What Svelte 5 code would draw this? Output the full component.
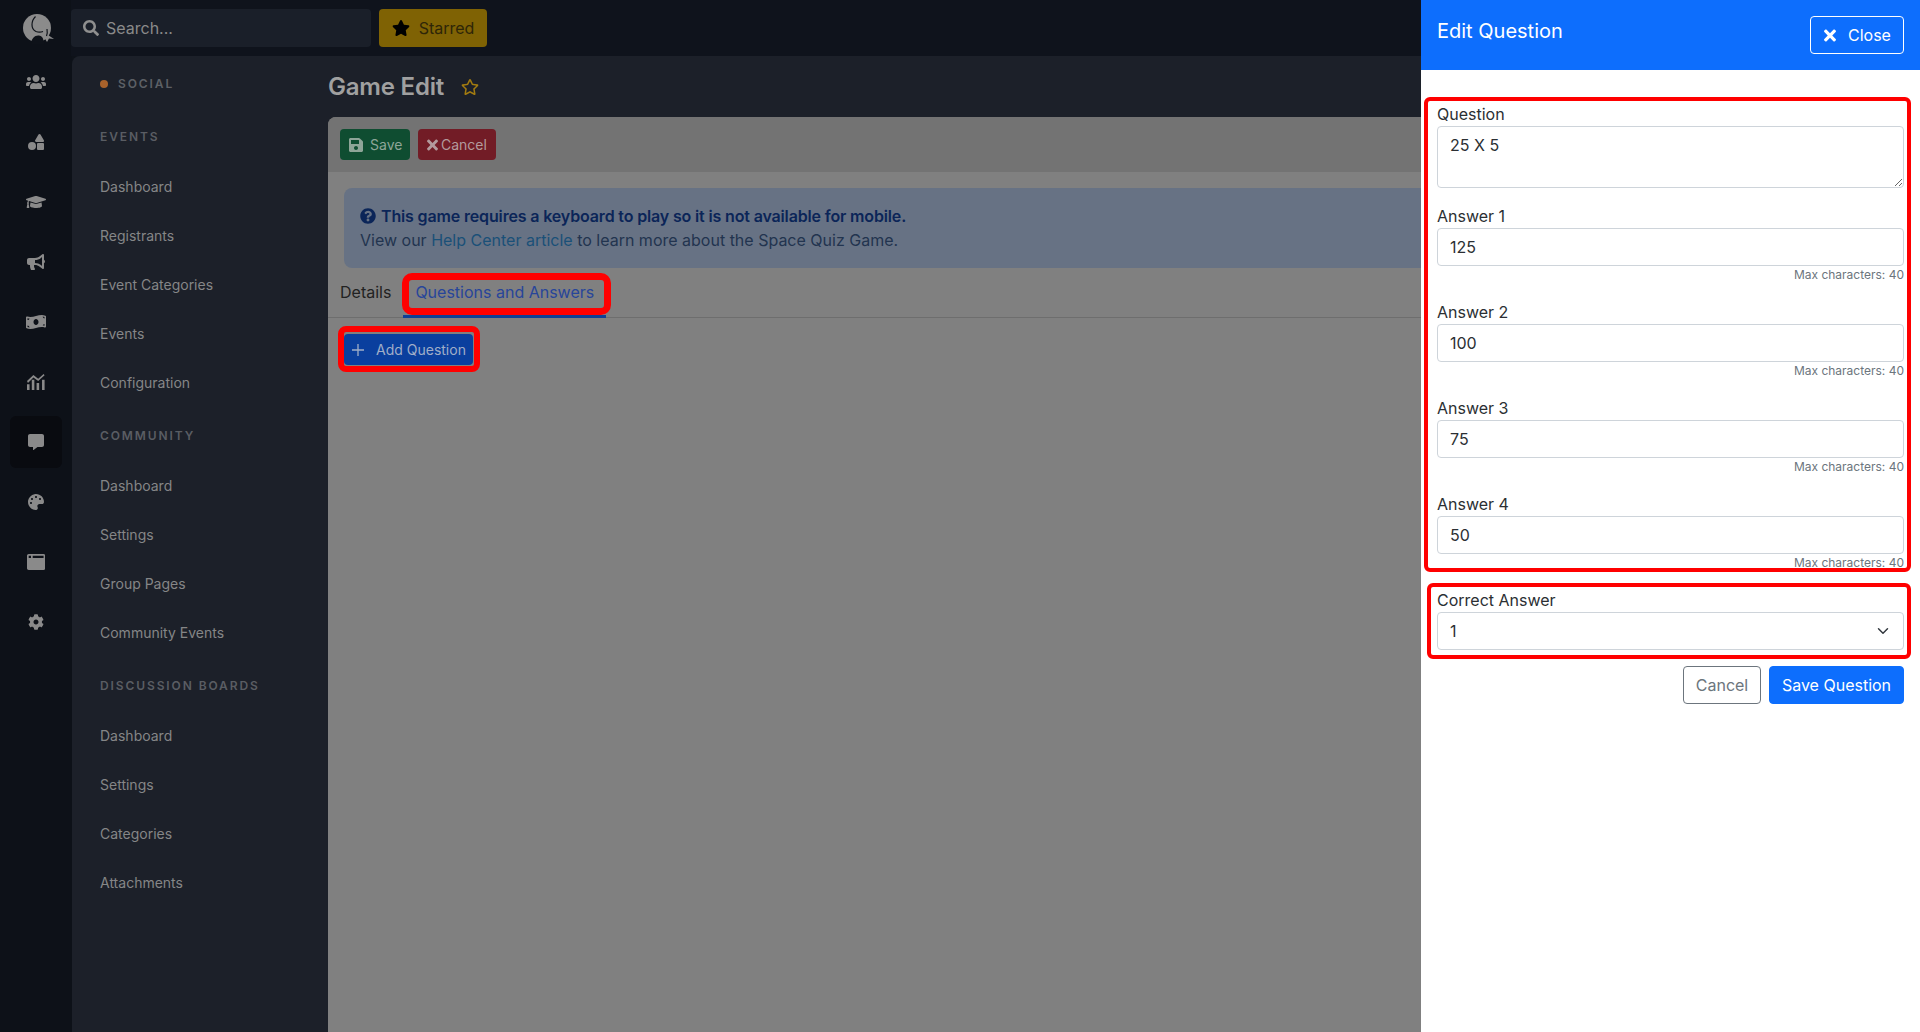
<script lang="ts">
  const groups = [
    { title: "Events", links: ["Dashboard", "Registrants", "Event Categories", "Events", "Configuration"] },
    { title: "Community", links: ["Dashboard", "Settings", "Group Pages", "Community Events"] },
    { title: "Discussion Boards", links: ["Dashboard", "Settings", "Categories", "Attachments"] },
  ];
  const answers = [
    { label: "Answer 1", value: "125" },
    { label: "Answer 2", value: "100" },
    { label: "Answer 3", value: "75" },
    { label: "Answer 4", value: "50" },
  ];

  const star = "M259.3 17.8L194 150.2 47.9 171.5c-26.2 3.8-36.7 36.1-17.7 54.6l105.7 103-25 145.5c-4.5 26.3 23.2 46 46.4 33.7L288 439.6l130.7 68.7c23.2 12.2 50.9-7.4 46.4-33.7l-25-145.5 105.7-103c19-18.5 8.5-50.8-17.7-54.6L382 150.2 316.7 17.8c-11.7-23.6-45.6-23.9-57.4 0z";
  const starOutline = "M528.1 171.5L382 150.2 316.7 17.8c-11.7-23.6-45.6-23.9-57.4 0L194 150.2 47.9 171.5c-26.2 3.8-36.7 36.1-17.7 54.6l105.7 103-25 145.5c-4.5 26.3 23.2 46 46.4 33.7L288 439.6l130.7 68.7c23.2 12.2 50.9-7.4 46.4-33.7l-25-145.5 105.7-103c19-18.5 8.5-50.8-17.7-54.6zM388.6 312.3l23.7 138.4L288 385.4l-124.3 65.3 23.7-138.4-100.6-98 139-20.2 62.2-126 62.2 126 139 20.2-100.6 98z";
  const times = "M242.72 256l100.07-100.07c12.28-12.28 12.28-32.19 0-44.48l-22.24-22.24c-12.28-12.28-32.19-12.28-44.48 0L176 189.28 75.93 89.21c-12.28-12.28-32.19-12.28-44.48 0L9.21 111.45c-12.28 12.28-12.28 32.19 0 44.48L109.28 256 9.21 356.07c-12.28 12.28-12.28 32.19 0 44.48l22.24 22.24c12.28 12.28 32.2 12.28 44.48 0L176 322.72l100.07 100.07c12.28 12.28 32.2 12.28 44.48 0l22.24-22.24c12.28-12.28 12.28-32.19 0-44.48L242.72 256z";
  const search = "M505 442.7L405.3 343c-4.5-4.5-10.6-7-17-7H372c27.6-35.3 44-79.7 44-128C416 93.1 322.9 0 208 0S0 93.1 0 208s93.1 208 208 208c48.3 0 92.7-16.4 128-44v16.3c0 6.4 2.5 12.5 7 17l99.7 99.7c9.4 9.4 24.6 9.4 33.9 0l28.3-28.3c9.4-9.4 9.4-24.6.1-34zM208 336c-70.7 0-128-57.2-128-128 0-70.7 57.2-128 128-128 70.7 0 128 57.2 128 128 0 70.7-57.2 128-128 128z";
  const save = "M433.941 129.941l-83.882-83.882A48 48 0 0 0 316.118 32H48C21.49 32 0 53.49 0 80v352c0 26.51 21.49 48 48 48h352c26.51 0 48-21.49 48-48V163.882a48 48 0 0 0-14.059-33.941zM224 416c-35.346 0-64-28.654-64-64 0-35.346 28.654-64 64-64s64 28.654 64 64c0 35.346-28.654 64-64 64zm96-304.52V212c0 6.627-5.373 12-12 12H76c-6.627 0-12-5.373-12-12V108c0-6.627 5.373-12 12-12h228.52c3.183 0 6.235 1.264 8.485 3.515l3.48 3.48A11.996 11.996 0 0 1 320 111.48z";
  const question = "M504 256c0 136.997-111.043 248-248 248S8 392.997 8 256C8 119.083 119.043 8 256 8s248 111.083 248 248zM262.655 90c-54.497 0-89.255 22.957-116.549 63.758-3.536 5.286-2.353 12.415 2.715 16.258l34.699 26.31c5.205 3.947 12.621 3.008 16.665-2.122 17.864-22.658 30.113-35.797 57.303-35.797 20.429 0 45.698 13.148 45.698 32.958 0 14.976-12.363 22.667-32.534 33.976C247.128 238.528 216 254.941 216 296v4c0 6.627 5.373 12 12 12h56c6.627 0 12-5.373 12-12v-1.333c0-28.462 83.186-29.647 83.186-106.667 0-58.002-60.165-102-116.531-102zM256 338c-25.365 0-46 20.635-46 46 0 25.364 20.635 46 46 46s46-20.636 46-46c0-25.365-20.635-46-46-46z";

  const rail = [
    { vb: "0 0 640 512", d: "M96 224c35.3 0 64-28.7 64-64s-28.7-64-64-64-64 28.7-64 64 28.7 64 64 64zm448 0c35.3 0 64-28.7 64-64s-28.7-64-64-64-64 28.7-64 64 28.7 64 64 64zm32 32h-64c-17.6 0-33.5 7.1-45.1 18.6 40.3 22.1 68.9 62 75.1 109.4h66c17.7 0 32-14.3 32-32v-32c0-35.3-28.7-64-64-64zm-256 0c61.9 0 112-50.1 112-112S381.9 32 320 32 208 82.1 208 144s50.1 112 112 112zm76.8 32h-8.3c-20.8 10-43.9 16-68.5 16s-47.6-6-68.5-16h-8.3C179.6 288 128 339.6 128 403.2V432c0 26.5 21.5 48 48 48h288c26.5 0 48-21.5 48-48v-28.8c0-63.6-51.6-115.2-115.2-115.2zm-223.7-13.4C161.5 263.1 145.6 256 128 256H64c-35.3 0-64 28.7-64 64v32c0 17.7 14.3 32 32 32h65.9c6.3-47.4 34.9-87.3 75.2-109.4z" },
    { vb: "0 0 512 512", d: "M128,256A128,128,0,1,0,256,384,128,128,0,0,0,128,256Zm379-54.86L400.07,18.29a37.26,37.26,0,0,0-64.14,0L229,201.14C214.76,225.52,232.58,256,261.09,256H474.91C503.42,256,521.24,225.52,507,201.14ZM480,288H320a32,32,0,0,0-32,32V480a32,32,0,0,0,32,32H480a32,32,0,0,0,32-32V320A32,32,0,0,0,480,288Z" },
    { vb: "0 0 640 512", d: "M622.34 153.2L343.4 67.5c-15.2-4.67-31.6-4.67-46.79 0L17.66 153.2c-23.54 7.23-23.54 38.36 0 45.59l48.63 14.94c-10.67 13.19-17.23 29.28-17.88 46.9C38.78 266.15 32 276.11 32 288c0 10.78 5.68 19.85 13.86 25.65L20.33 428.53C18.11 438.52 25.71 448 35.94 448h56.11c10.24 0 17.84-9.48 15.62-19.47L82.14 313.65C90.32 307.85 96 298.78 96 288c0-11.57-6.47-21.25-15.66-26.87.76-15.02 8.44-28.3 20.69-36.72L296.6 284.5c9.06 2.78 26.44 6.25 46.79 0l278.95-85.7c23.55-7.24 23.55-38.36 0-45.6zM352.79 315.09c-28.53 8.76-52.84 3.92-65.59 0l-145.02-44.55L128 384c0 35.35 85.96 64 192 64s192-28.65 192-64l-14.18-113.47-145.03 44.56z" },
    { vb: "0 0 576 512", d: "M576 240c0-23.63-12.95-44.04-32-55.12V32.01C544 23.26 537.02 0 512 0c-7.12 0-14.19 2.38-19.98 7.02l-85.03 68.03C364.28 109.09 310.66 128 256 128H64c-35.35 0-64 28.65-64 64v96c0 35.35 28.65 64 64 64h33.7c-1.39 10.48-2.18 21.14-2.18 32 0 39.77 9.26 77.35 25.56 110.94 5.19 10.69 16.52 17.06 28.4 17.06h74.28c26.05 0 41.69-29.84 25.9-50.56-16.4-21.52-26.15-48.36-26.15-77.44 0-11.11 1.62-21.79 4.41-32H256c54.66 0 108.28 18.91 150.98 52.95l85.03 68.03a32.023 32.023 0 0 0 19.98 7.02c24.92 0 32-22.78 32-32V295.13C563.05 284.04 576 263.63 576 240zm-96 141.42l-33.05-26.44C392.95 311.78 325.12 288 256 288v-96c69.12 0 136.95-23.78 190.95-66.98L480 98.58v282.84z" },
    { vb: "0 0 640 512", d: "M621.16 54.46C582.37 38.19 543.55 32 504.75 32c-123.17-.01-246.33 62.34-369.5 62.34-30.89 0-61.76-3.92-92.65-13.72-3.47-1.1-6.95-1.62-10.35-1.62C15.04 79 0 92.32 0 110.81v317.26c0 12.63 7.23 24.6 18.84 29.46C57.63 473.81 96.45 480 135.25 480c123.17 0 246.34-62.35 369.51-62.35 30.89 0 61.76 3.92 92.65 13.72 3.47 1.1 6.95 1.62 10.35 1.62 17.21 0 32.25-13.32 32.25-31.81V83.93c-.01-12.64-7.24-24.6-18.85-29.47zM48 132.22c20.12 5.04 41.12 7.57 62.72 8.93C104.84 170.54 79 192.69 48 192.69v-60.47zm0 285v-47.78c34.37 0 62.18 27.27 63.71 61.4-22.53-1.81-43.59-6.31-63.71-13.62zM320 352c-44.19 0-80-42.99-80-96 0-53.02 35.82-96 80-96s80 42.98 80 96c0 53.03-35.83 96-80 96zm272 27.78c-17.52-4.39-35.71-6.85-54.32-8.44 5.87-26.08 27.5-45.88 54.32-49.28v57.72zm0-236.11c-30.89-3.91-54.86-29.7-55.81-61.55 19.54 2.17 38.09 6.23 55.81 12.66v48.89z" },
    { vb: "0 0 55 50", d: "M0 32h8v18H0zM15 18h8v32h-8zM30 28h8v22h-8zM47 18h8v32h-8zM0 22L20 3l15 12L52 0l3 4-20 18-15-11L3 28z" },
    { vb: "0 0 512 512", d: "M448 0H64C28.7 0 0 28.7 0 64v288c0 35.3 28.7 64 64 64h96v84c0 9.8 11.2 15.5 19.1 9.7L304 416h144c35.3 0 64-28.7 64-64V64c0-35.3-28.7-64-64-64z" },
    { vb: "0 0 512 512", d: "M204.3 5C104.9 24.4 24.8 104.3 5.2 203.4c-37 187 131.7 326.4 258.8 306.7 41.2-6.4 61.4-54.6 42.5-91.7-23.1-45.4 9.9-98.4 60.9-98.4h79.7c35.8 0 64.8-29.6 64.9-65.3C511.5 97.1 368.1-26.9 204.3 5zM96 320c-17.7 0-32-14.3-32-32s14.3-32 32-32 32 14.3 32 32-14.3 32-32 32zm32-128c-17.7 0-32-14.3-32-32s14.3-32 32-32 32 14.3 32 32-14.3 32-32 32zm128-64c-17.7 0-32-14.3-32-32s14.3-32 32-32 32 14.3 32 32-14.3 32-32 32zm128 64c-17.7 0-32-14.3-32-32s14.3-32 32-32 32 14.3 32 32-14.3 32-32 32z" },
    { vb: "0 0 512 448", d: "M48 0h416c26.500 0 48 21.500 48 48v352c0 26.500-21.500 48-48 48H48c-26.500 0-48-21.500-48-48V48C0 21.500 21.500 0 48 0zM48 48v64h64V48zm112 0v64h304V48z" },
    { vb: "0 0 512 512", d: "M487.4 315.7l-42.6-24.6c4.3-23.2 4.3-47 0-70.2l42.6-24.6c4.9-2.8 7.1-8.6 5.5-14-11.1-35.6-30-67.8-54.7-94.6-3.8-4.1-10-5.1-14.8-2.3L380.8 110c-17.9-15.4-38.5-27.3-60.8-35.1V25.8c0-5.6-3.9-10.5-9.4-11.7-36.7-8.2-74.3-7.8-109.2 0-5.5 1.2-9.4 6.1-9.4 11.7V75c-22.2 7.9-42.8 19.8-60.8 35.1L88.7 85.5c-4.9-2.8-11-1.9-14.8 2.3-24.7 26.7-43.6 58.9-54.7 94.6-1.7 5.4.6 11.2 5.5 14L67.3 221c-4.3 23.2-4.3 47 0 70.2l-42.6 24.6c-4.9 2.8-7.1 8.6-5.5 14 11.1 35.6 30 67.8 54.7 94.6 3.8 4.1 10 5.1 14.8 2.3l42.6-24.6c17.9 15.4 38.5 27.3 60.8 35.1v49.2c0 5.6 3.9 10.5 9.4 11.7 36.7 8.2 74.3 7.8 109.2 0 5.5-1.2 9.4-6.1 9.4-11.7v-49.2c22.2-7.9 42.8-19.8 60.8-35.1l42.6 24.6c4.9 2.8 11 1.9 14.8-2.3 24.7-26.7 43.6-58.9 54.7-94.6 1.5-5.5-.7-11.3-5.6-14.1zM256 336c-44.1 0-80-35.9-80-80s35.9-80 80-80 80 35.9 80 80-35.9 80-80 80z" },
  ];
  const activeRail = 6;
</script>

<div class="app">
  <aside class="rail">
    <div class="logo">
      <svg viewBox="0 0 32 30" width="32" height="30">
        <circle cx="14" cy="14" r="14" fill="#8b8b8b"/>
        <path fill="#8b8b8b" d="M23 13l2 8 6 4-5-.5-2 3.500-3-5z"/>
        <path fill="#0e1219" d="M8 30c.5-6 4-9 8-8.500 2.500.3 4 2 4.500 5l1.500 3.500z"/>
        <path fill="none" stroke="#0e1219" stroke-width="1.200" d="M12.500 2.500C8 7 7.500 15 13 17.500c2.500 1 5 .8 7 0M24 15c.5 3 .5 5-.5 7"/>
      </svg>
    </div>
    {#each rail as icon, i}
      <div class="rail-cell">
        <div class="rail-item" class:active={i === activeRail}>
          <svg viewBox={icon.vb} height="16" fill="#8a8a8a" fill-rule="evenodd"><path d={icon.d}/></svg>
        </div>
      </div>
    {/each}
  </aside>

  <div class="main">
    <header class="topbar">
      <div class="search">
        <svg viewBox="0 0 512 512" width="16" height="16" fill="#8f8f8f"><path d={search}/></svg>
        <input type="text" placeholder="Search..." />
      </div>
      <button class="starred">
        <svg viewBox="0 0 576 512" width="18" height="16" fill="#000"><path d={star}/></svg>
        Starred
      </button>
    </header>

    <div class="body">
      <nav class="sidebar">
        <div class="social"><span class="dot"></span>SOCIAL</div>
        {#each groups as group}
          <div class="group-title">{group.title}</div>
          {#each group.links as link}
            <a class="side-link" href="#top">{link}</a>
          {/each}
        {/each}
      </nav>

      <main class="content">
        <div class="page-title">
          <h1>Game Edit</h1>
          <svg viewBox="0 0 576 512" width="18" height="16" fill="#a27b10"><path d={starOutline}/></svg>
        </div>

        <section class="card">
          <div class="card-head">
            <button class="btn green">
              <svg viewBox="0 0 448 512" width="14" height="16" fill="currentColor" fill-rule="evenodd"><path d={save}/></svg>
              Save
            </button>
            <button class="btn red">
              <svg viewBox="0 64 352 384" width="11" height="12" fill="currentColor"><path d={times}/></svg>
              Cancel
            </button>
          </div>
          <div class="card-body">
            <div class="alert">
              <div class="alert-strong">
                <svg viewBox="0 0 512 512" width="16" height="16" fill="currentColor" fill-rule="evenodd"><path d={question}/></svg>
                This game requires a keyboard to play so it is not available for mobile.
              </div>
              <div>View our <a href="#top">Help Center article</a> to learn more about the Space Quiz Game.</div>
            </div>
            <div class="tabs">
              <span class="tab">Details</span>
              <span class="tab active">Questions and Answers</span>
            </div>
            <button class="btn blue">
              <svg viewBox="0 0 12 12" width="12" height="12" stroke="currentColor" stroke-width="1.300" fill="none"><path d="M6 0v12M0 6h12"/></svg>
              Add Question
            </button>
          </div>
        </section>
      </main>
    </div>
  </div>

  <aside class="panel">
    <header class="panel-head">
      <h2>Edit Question</h2>
      <button class="close">
        <svg viewBox="0 64 352 384" width="12" height="13" fill="#fff"><path d={times}/></svg>
        Close
      </button>
    </header>
    <form class="panel-body">
      <label class="field">
        <span>Question</span>
        <textarea rows="2">25 X 5</textarea>
      </label>
      {#each answers as answer}
        <label class="field">
          <span>{answer.label}</span>
          <input type="text" value={answer.value} />
          <small>Max characters: 40</small>
        </label>
      {/each}
      <label class="field">
        <span>Correct Answer</span>
        <select>
          <option>1</option>
          <option>2</option>
          <option>3</option>
          <option>4</option>
        </select>
      </label>
      <div class="panel-actions">
        <button type="button" class="ghost">Cancel</button>
        <button type="button" class="primary">Save Question</button>
      </div>
    </form>
  </aside>

  <!-- red annotation boxes drawn on top of the screenshot -->
  <div class="mark mark-tab"></div>
  <div class="mark mark-add"></div>
  <div class="mark mark-form"></div>
  <div class="mark mark-select"></div>
</div>

<style>
  :global(body) { margin:0; background:#0d1118; font-family:Inter, "Noto Sans", sans-serif; }
  .app { position:relative; display:flex; height:100vh; min-height:1032px; overflow:hidden; font-family:Inter, "Noto Sans", sans-serif; font-size:16px; line-height:24px; background:#0e1219; }
  svg { display:block; flex-shrink:0; }
  button { font-family:inherit; cursor:pointer; }

  .rail { width:72px; flex-shrink:0; background:#0d1118; }
  .logo { height:52px; display:flex; align-items:center; justify-content:center; padding:5px 0 0 6px; box-sizing:border-box; }
  .rail-cell { height:60px; display:flex; align-items:center; justify-content:center; }
  .rail-item { width:52px; height:52px; border-radius:6px; display:flex; align-items:center; justify-content:center; }
  .rail-item.active { background:#090b10; }

  .main { flex:1; min-width:0; display:flex; flex-direction:column; }
  .topbar { height:56px; flex-shrink:0; display:flex; align-items:flex-start; gap:8px; padding-top:9px; box-sizing:border-box; background:#0f131c; margin-left:-1px; }
  .search { width:300px; height:38px; box-sizing:border-box; display:flex; align-items:center; gap:7px; padding-left:12px; background:#1a1f29; border-radius:4px; }
  .search input { flex:1; min-width:0; border:0; background:none; outline:none; padding:0; font:inherit; color:#8a8a8a; }
  .search input::placeholder { color:#8a8a8a; opacity:1; }
  .starred { height:38px; width:108px; display:flex; align-items:center; justify-content:center; gap:9px; padding:0; border:0; border-radius:4px; background:#7f6204; color:#2e2608; font-size:16px; }

  .body { flex:1; min-height:0; display:flex; }
  .sidebar { width:256px; flex-shrink:0; box-sizing:border-box; padding:16px 0 0 28px; background:#1c2029; border-top-left-radius:8px; }
  .social { display:flex; align-items:center; height:24px; margin-bottom:29px; font-size:12px; font-weight:600; letter-spacing:1.900px; color:#5d6066; }
  .dot { width:8px; height:8px; border-radius:50%; background:#a8622b; margin-right:10px; }
  .group-title { height:24px; line-height:24px; margin:16.500px 0 13.500px; font-size:12px; font-weight:600; letter-spacing:1.900px; text-transform:uppercase; color:#5a5d63; }
  .side-link { display:flex; align-items:center; height:49px; font-size:14px; color:#858687; text-decoration:none; }

  .content { flex:1; min-width:0; display:flex; flex-direction:column; background:#1c2029; }
  .page-title { height:61px; flex-shrink:0; display:flex; align-items:center; gap:17px; }
  .page-title h1 { margin:0; font-size:24px; font-weight:600; line-height:30px; letter-spacing:-0.2px; color:#a0a0a0; }
  .card { flex:1; background:#808080; border-top-left-radius:8px; overflow:hidden; }
  .card-head { height:55px; box-sizing:border-box; display:flex; gap:8px; padding:12px; background:#737373; }
  .card-body { padding:16px; }
  .btn { height:31px; box-sizing:border-box; display:inline-flex; align-items:center; border:0; border-radius:4px; font-size:14px; padding:0 9px; white-space:nowrap; }
  .green { width:70px; gap:7px; background:#0f4d31; color:#8ea598; }
  .red { width:78px; gap:3px; background:#721c26; color:#b39a9d; }
  .blue { width:129px; gap:12px; padding:0 8px; background:#0a3f9e; color:#a0aec8; }

  .alert { height:80px; box-sizing:border-box; padding:16px; border-radius:8px; background:#677284; color:#22344f; }
  .alert-strong { display:flex; align-items:center; gap:5px; font-weight:600; letter-spacing:-0.15px; color:#0b2558; }
  .alert a { color:#1a5078; text-decoration:none; }
  .tabs { display:flex; height:50px; margin:0 -16px 16px; box-sizing:border-box; border-bottom:1px solid #6e6e6e; }
  .tab { padding:0 12px; line-height:48px; color:#222; }
  .tab.active { color:#27459a; height:50px; box-sizing:border-box; border-bottom:3px solid #0d3f96; }

  .panel { position:absolute; top:0; right:0; bottom:0; width:499px; background:#fff; display:flex; flex-direction:column; }
  .panel-head { height:70px; flex-shrink:0; box-sizing:border-box; padding:16px; display:flex; justify-content:space-between; align-items:flex-start; background:#0d6efd; }
  .panel-head h2 { margin:0; font-size:20px; font-weight:400; line-height:30px; color:#fff; }
  .close { width:94px; height:38px; box-sizing:border-box; display:flex; align-items:center; gap:12px; padding:0 12px 0 13px; background:none; border:1px solid #fff; border-radius:4px; color:#fff; font-size:16px; }
  .panel-body { padding:32px 16px 0; }
  .field { display:block; margin-bottom:16px; color:#2b2f33; }
  .field span { display:block; height:24px; }
  .field textarea, .field input, .field select { display:block; width:100%; box-sizing:border-box; border:1px solid #ced4da; border-radius:4px; padding:6px 12px; background:#fff; color:#2b2f33; font:inherit; outline:none; margin:0; }
  .field textarea { height:62px; }
  .field input, .field select { height:38px; }
  .field select { appearance:none; background-image:url("data:image/svg+xml,%3csvg xmlns='http://www.w3.org/2000/svg' viewBox='0 0 16 16'%3e%3cpath fill='none' stroke='%23343a40' stroke-linecap='round' stroke-linejoin='round' stroke-width='2' d='M2 5l6 6 6-6'/%3e%3c/svg%3e"); background-repeat:no-repeat; background-position:right 12px center; background-size:16px 12px; }
  .field small { display:block; height:18px; line-height:18px; font-size:12px; text-align:right; color:#6c757d; }
  .panel-actions { display:flex; justify-content:flex-end; gap:8px; }
  .ghost, .primary { height:38px; box-sizing:border-box; border-radius:4px; font-size:16px; padding:0; }
  .ghost { width:78px; background:#fff; border:1px solid #6c757d; color:#6c757d; }
  .primary { width:135px; background:#0d6efd; border:1px solid #0d6efd; color:#fff; }

  .mark { position:absolute; box-sizing:border-box; border:solid #f00; pointer-events:none; }
  .mark-tab { left:402px; top:273px; width:209px; height:42px; border-width:7px; border-radius:10px; }
  .mark-add { left:338px; top:326px; width:142px; height:46px; border-width:6px; border-radius:8px; }
  .mark-form { left:1424px; top:97px; width:487px; height:475px; border-width:4px; border-radius:6px; }
  .mark-select { left:1427px; top:583px; width:484px; height:76px; border-width:4px; border-radius:6px; }
</style>
